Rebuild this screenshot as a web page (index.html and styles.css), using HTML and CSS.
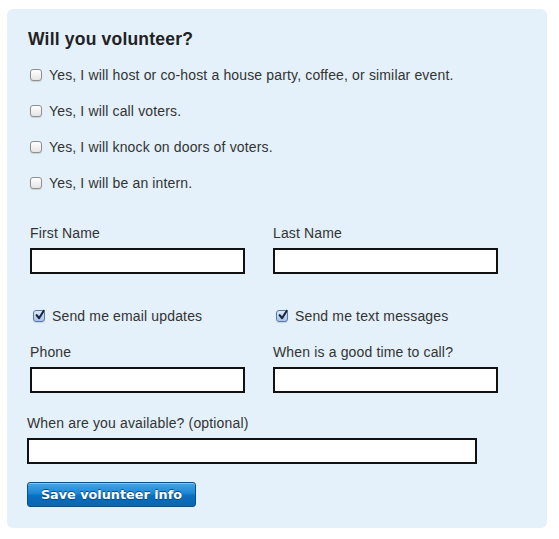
FILE: index.html
```html
<!DOCTYPE html>
<html>
<head>
<meta charset="utf-8">
<link rel="stylesheet" href="styles.css">
</head>
<body>
<form class="panel">
  <h2 class="title">Will you volunteer?</h2>
  <ul class="options">
    <li class="check"><span class="box"></span><span>Yes, I will host or co-host a house party, coffee, or similar event.</span></li>
    <li class="check"><span class="box"></span><span>Yes, I will call voters.</span></li>
    <li class="check"><span class="box"></span><span>Yes, I will knock on doors of voters.</span></li>
    <li class="check"><span class="box"></span><span>Yes, I will be an intern.</span></li>
  </ul>
  <div class="grid names">
    <div class="field"><label>First Name</label><input class="text" type="text"></div>
    <div class="field"><label>Last Name</label><input class="text right" type="text"></div>
  </div>
  <div class="grid opts">
    <div class="check on"><span class="box checked"><svg viewBox="0 0 12 12" width="12" height="12"><path d="M2.6 6.2 L5 9.2 L9.8 1.8" fill="none" stroke="#16243f" stroke-width="2.1" stroke-linecap="round" stroke-linejoin="round"/></svg></span><span>Send me email updates</span></div>
    <div class="check on second"><span class="box checked"><svg viewBox="0 0 12 12" width="12" height="12"><path d="M2.6 6.2 L5 9.2 L9.8 1.8" fill="none" stroke="#16243f" stroke-width="2.1" stroke-linecap="round" stroke-linejoin="round"/></svg></span><span>Send me text messages</span></div>
  </div>
  <div class="grid phones">
    <div class="field"><label>Phone</label><input class="text" type="text"></div>
    <div class="field"><label>When is a good time to call?</label><input class="text right" type="text"></div>
  </div>
  <div class="field wide"><label>When are you available? (optional)</label><input class="text long" type="text"></div>
  <button class="save" type="button">Save volunteer info</button>
</form>
</body>
</html>
```
FILE: styles.css
```css
html, body {
  margin: 0;
  padding: 0;
  background: #ffffff;
}
body {
  font-family: "Liberation Sans", Arial, Helvetica, sans-serif;
  color: #333333;
  font-size: 14px;
  line-height: 16px;
  letter-spacing: 0.15px;
}
.panel {
  box-sizing: border-box;
  width: 540px;
  height: 519px;
  margin: 9px 0 0 7px;
  padding: 20px 0 0 20px;
  background: #e4f1fa;
  border-radius: 6px;
}
.title {
  margin: 0 0 0 1px;
  font-size: 17.5px;
  line-height: 20px;
  font-weight: bold;
  color: #222222;
  letter-spacing: 0.2px;
}
.options {
  list-style: none;
  margin: 18px 0 0 3px;
  padding: 0;
  display: flex;
  flex-direction: column;
  gap: 20px;
}
.check {
  display: flex;
  align-items: center;
  gap: 7px;
  height: 16px;
}
.box {
  box-sizing: border-box;
  width: 12px;
  height: 12px;
  border: 1px solid #8f8f8f;
  border-radius: 3px;
  background: linear-gradient(#ffffff, #e4e4e4);
  box-shadow: 0 1px 1px rgba(0, 0, 0, 0.12);
  flex: none;
  display: block;
  position: relative;
}
.box.checked {
  border-color: #5a78a8;
  background: linear-gradient(#dbe8f8, #a9c3e6);
}
.box svg {
  position: absolute;
  left: 0;
  top: -2px;
  overflow: visible;
}
.grid {
  display: grid;
  grid-template-columns: 215px 225px;
  column-gap: 28px;
  margin-left: 3px;
}
.names {
  margin-top: 34px;
}
.field {
  display: flex;
  flex-direction: column;
  gap: 7px;
  align-items: flex-start;
}
.field label {
  display: block;
}
.text {
  box-sizing: border-box;
  width: 215px;
  height: 26px;
  margin: 0;
  border: 2px solid #111111;
  background: #ffffff;
  padding: 0 4px;
  font: inherit;
}
.text.right {
  width: 225px;
}
.opts {
  margin-top: 34px;
  margin-left: 6px;
  column-gap: 28px;
}
.phones {
  margin-top: 20px;
}
.wide {
  margin-top: 22px;
}
.text.long {
  width: 450px;
}
.save {
  display: block;
  box-sizing: border-box;
  margin: 18px 0 0 0;
  width: 169px;
  height: 25px;
  padding: 0;
  border: 1px solid #0b4f86;
  border-radius: 3px;
  background: linear-gradient(#4aa6e6 0%, #1a86d4 45%, #0a6fbf 55%, #0866b2 100%);
  color: #ffffff;
  font-family: "DejaVu Sans", "Liberation Sans", sans-serif;
  font-weight: bold;
  font-size: 12.8px;
  letter-spacing: 0;
  line-height: 22px;
  text-shadow: 0 -1px 0 #0a4a80, 0 1px 1px rgba(0, 0, 0, 0.35);
  box-shadow: inset 0 1px 0 rgba(255, 255, 255, 0.35);
}
```
